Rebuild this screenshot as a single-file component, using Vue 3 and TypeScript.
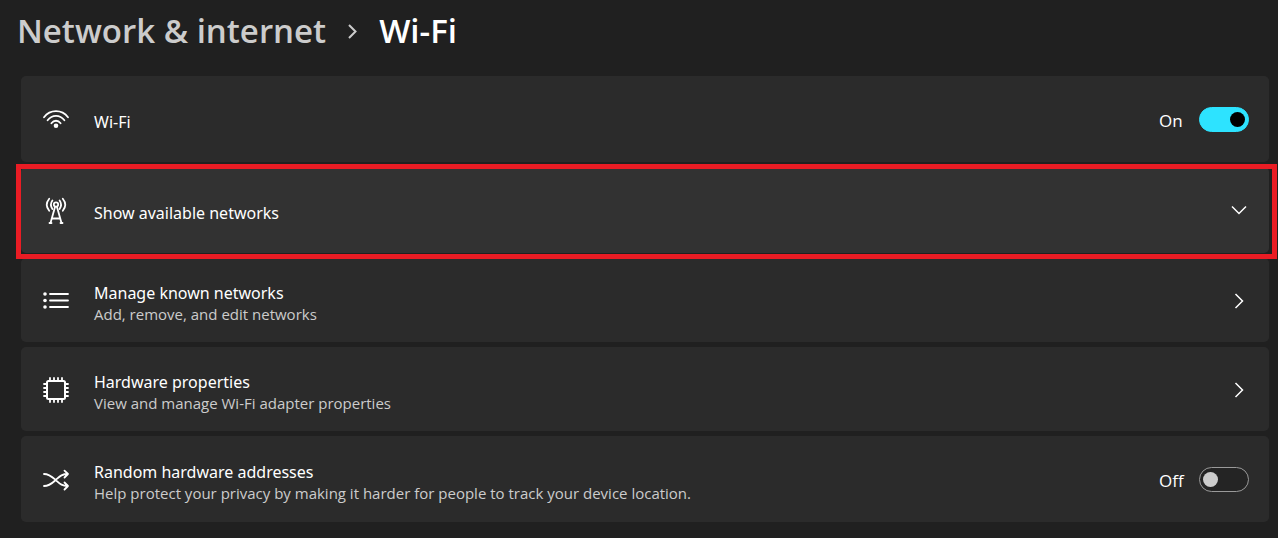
<script setup lang="ts">
import { ref } from 'vue'

type IconName = 'wifi' | 'tower' | 'list' | 'chip' | 'shuffle'

interface Row {
  id: string
  icon: IconName
  title: string
  detail?: string
  control: 'toggle' | 'expand' | 'link'
  highlighted?: boolean
}

const rows: Row[] = [
  { id: 'wifi', icon: 'wifi', title: 'Wi-Fi', control: 'toggle' },
  { id: 'available', icon: 'tower', title: 'Show available networks', control: 'expand', highlighted: true },
  { id: 'known', icon: 'list', title: 'Manage known networks', detail: 'Add, remove, and edit networks', control: 'link' },
  { id: 'hardware', icon: 'chip', title: 'Hardware properties', detail: 'View and manage Wi-Fi adapter properties', control: 'link' },
  {
    id: 'random',
    icon: 'shuffle',
    title: 'Random hardware addresses',
    detail: 'Help protect your privacy by making it harder for people to track your device location.',
    control: 'toggle',
  },
]

const tagFor = { toggle: 'label', expand: 'button', link: 'a' }

const toggles = ref<Record<string, boolean>>({ wifi: true, random: false })

function attrsFor(row: Row): Record<string, string> {
  if (row.control === 'toggle') return { for: row.id }
  if (row.control === 'expand') return { type: 'button', 'aria-expanded': 'false' }
  return { href: '#' + row.id }
}
</script>

<template>
  <main class="page">
    <nav class="crumbs" aria-label="Breadcrumb">
      <a class="crumb-parent" href="#network">Network &amp; internet</a>
      <svg class="crumb-arrow" viewBox="0 0 12 16" aria-hidden="true"><path d="M2 2l6.500 6.500L2 15" /></svg>
      <h1 class="crumb-current">Wi-Fi</h1>
    </nav>

    <div class="cards">
      <component
        :is="tagFor[row.control]"
        v-for="row in rows"
        :key="row.id"
        class="card"
        :class="[row.control, { highlighted: row.highlighted }]"
        v-bind="attrsFor(row)"
      >
        <svg class="icon" viewBox="0 0 28 28" aria-hidden="true">
          <template v-if="row.icon === 'wifi'">
            <path d="M2 12.2C8.200 4.200 19.800 4.200 26 12.200M5.600 15.200C10.200 9.400 17.800 9.400 22.400 15.200M9.400 18.200C12 14.900 16 14.900 18.600 18.200" />
            <circle class="solid" cx="14" cy="20.800" r="2.300" />
          </template>
          <template v-else-if="row.icon === 'tower'">
            <circle cx="14" cy="8.500" r="2.200" />
            <path d="M13 11L8.500 27M15 11l4.500 16M10.200 22.500h7.600M7.500 27h2M18.500 27h2" />
            <path d="M10.400 4.500C8.600 7 8.600 10.300 10.400 13M17.600 4.500c1.800 2.500 1.800 5.800 0 8.500M7.200 2.800c-3 3.700-3 8.300 0 12M20.800 2.800c3 3.700 3 8.300 0 12" />
          </template>
          <template v-else-if="row.icon === 'list'">
            <path d="M8 8h18M8 14.500h18M8 21h18" />
            <circle class="solid" cx="3" cy="8" r="1.800" />
            <circle class="solid" cx="3" cy="14.500" r="1.800" />
            <circle class="solid" cx="3" cy="21" r="1.800" />
          </template>
          <template v-else-if="row.icon === 'chip'">
            <rect class="heavy" x="5" y="6" width="18" height="18" rx="1.500" />
            <path d="M8 6V3M12 6V3M16 6V3M20 6V3M8 27V24M12 27V24M16 27V24M20 27V24M5 9H2M5 13H2M5 17H2M5 21H2M26 9H23M26 13H23M26 17H23M26 21H23" />
          </template>
          <template v-else>
            <path d="M2 9c5.500 0 8.500 3.200 12 6.300S19.500 21 26 21M2 21c6 0 8.500-3.200 12-6.300S19.500 9 26 9M22.500 5.700L26 9l-3.500 3.500M22.500 17.500l3.500 3.500-3.500 3.500" />
          </template>
        </svg>

        <span class="copy">
          <span class="title">{{ row.title }}</span>
          <span v-if="row.detail" class="detail">{{ row.detail }}</span>
        </span>

        <span v-if="row.control === 'toggle'" class="switch">
          <span class="state">{{ toggles[row.id] ? 'On' : 'Off' }}</span>
          <input :id="row.id" v-model="toggles[row.id]" class="track" type="checkbox" role="switch" />
        </span>
        <svg v-else class="chevron" viewBox="0 0 20 20" aria-hidden="true">
          <path :d="row.control === 'expand' ? 'M3 6.500l7 7 7-7' : 'M6.500 4l7 7-7 7'" />
        </svg>
      </component>
    </div>
  </main>
</template>

<style>
body {
  margin: 0;
  background: #202020;
}
</style>

<style scoped>
.page {
  box-sizing: border-box;
  min-height: 100vh;
  padding: 8px 9px 14px 21px;
  background: #202020;
  color: #fff;
  font-family: 'Open Sans', 'Noto Sans', sans-serif;
}

.crumbs {
  display: flex;
  align-items: center;
  height: 46px;
  margin: 0 0 22px -4px;
  font-size: 33px;
  font-weight: 600;
  line-height: 46px;
  white-space: nowrap;
}

.crumb-parent {
  color: #ccc;
  text-decoration: none;
}

.crumb-arrow {
  width: 12px;
  height: 16px;
  margin: 0 20px 0 21px;
  fill: none;
  stroke: #ccc;
  stroke-width: 2;
}

.crumb-current {
  margin: 0;
  font: inherit;
}

.cards {
  display: flex;
  flex-direction: column;
  gap: 5px;
}

.card {
  position: relative;
  box-sizing: border-box;
  display: flex;
  align-items: center;
  width: 100%;
  min-height: 86px;
  padding: 0 20px 0 21px;
  border: 0;
  border-radius: 5px;
  background: #2b2b2b;
  color: inherit;
  font: inherit;
  text-align: left;
  text-decoration: none;
  cursor: pointer;
}

.card.link {
  min-height: 84px;
}

.card.highlighted {
  z-index: 1;
  background: #323232;
}

.card.highlighted::after {
  content: '';
  position: absolute;
  inset: -3px -8px -6px -5px;
  border: 5px solid #ea1c24;
  pointer-events: none;
}

.icon {
  flex: none;
  width: 28px;
  height: 28px;
  margin-right: 24px;
  fill: none;
  stroke: #fff;
  stroke-width: 1.8;
  stroke-linecap: round;
  stroke-linejoin: round;
}

.icon .solid {
  fill: #fff;
  stroke: none;
}

.icon .heavy {
  stroke-width: 2;
}

.copy {
  flex: 1;
  min-width: 0;
  padding-top: 5px;
}

.title,
.detail {
  display: block;
}

.title {
  font-family: 'Noto Sans', 'Open Sans', sans-serif;
  font-size: 16px;
  line-height: 22px;
}

.detail {
  color: #ccc;
  font-size: 15px;
  line-height: 20px;
}

.switch {
  display: flex;
  align-items: center;
  gap: 16px;
}

.state {
  width: 24px;
  padding-top: 3px;
  font-size: 17px;
  line-height: 22px;
}

.track {
  appearance: none;
  box-sizing: border-box;
  display: flex;
  align-items: center;
  width: 50px;
  height: 25px;
  margin: 0;
  padding: 0 3px;
  border: 1px solid #9a9a9a;
  border-radius: 13px;
  background: #242424;
  cursor: pointer;
}

.track::before {
  content: '';
  width: 15px;
  height: 15px;
  border-radius: 50%;
  background: #ccc;
}

.track:checked {
  justify-content: flex-end;
  border-color: #2de3ff;
  background: #2de3ff;
}

.track:checked::before {
  background: #000;
}

.chevron {
  flex: none;
  width: 20px;
  height: 20px;
  fill: none;
  stroke: #fff;
  stroke-width: 1.5;
}
</style>
